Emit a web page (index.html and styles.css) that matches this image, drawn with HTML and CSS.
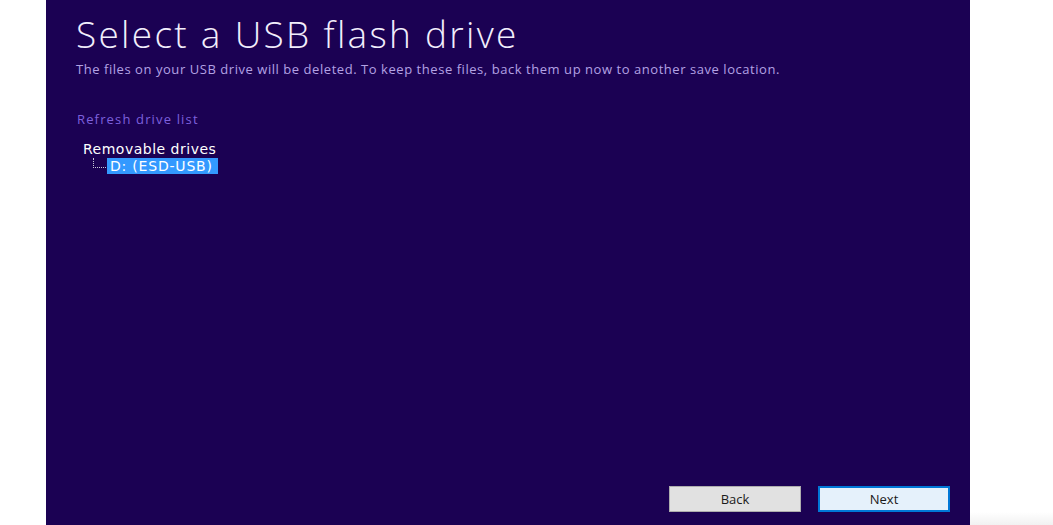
FILE: index.html
```html
<!DOCTYPE html>
<html>
<head>
<meta charset="utf-8">
<title>Select a USB flash drive</title>
<link rel="stylesheet" href="styles.css">
</head>
<body>
<div class="page">
  <main class="panel">
    <header class="head">
      <h1 class="title">Select a USB flash drive</h1>
      <p class="subtitle">The files on your USB drive will be deleted. To keep these files, back them up now to another save location.</p>
    </header>
    <a class="refresh" href="#">Refresh drive list</a>
    <div class="tree">
      <div class="tree-root">Removable drives</div>
      <div class="tree-child">
        <span class="connector"></span>
        <span class="tree-item selected">D: (ESD-USB)</span>
      </div>
    </div>
    <div class="spacer"></div>
    <footer class="actions">
      <button class="btn">Back</button>
      <button class="btn primary">Next</button>
    </footer>
  </main>
  <div class="side"></div>
</div>
</body>
</html>
```
FILE: styles.css
```css
html, body {
  margin: 0;
  padding: 0;
  background: #ffffff;
}
.page {
  display: flex;
  height: 525px;
  width: 1053px;
}
.panel {
  margin-left: 46px;
  width: 924px;
  height: 525px;
  background: #1b0153;
  display: flex;
  flex-direction: column;
  padding-left: 30px;
  box-sizing: border-box;
}
.side {
  flex: 1;
  background: linear-gradient(to bottom, #ffffff 0, #ffffff 512px, #f1f1f1 525px);
}
.head {
  padding-top: 14px;
}
.title {
  margin: 0;
  font-family: "Open Sans", sans-serif;
  font-weight: 300;
  font-size: 37px;
  line-height: 40px;
  color: #f2eefc;
  letter-spacing: 2.3px;
}
.subtitle {
  margin: 7px 0 0 0;
  font-family: "Open Sans", sans-serif;
  font-size: 13px;
  line-height: 17px;
  color: #b3a2e4;
  letter-spacing: 0.55px;
}
.refresh {
  margin-top: 32px;
  margin-left: 1px;
  font-family: "Open Sans", sans-serif;
  font-size: 13px;
  line-height: 18px;
  color: #7d60dd;
  text-decoration: none;
  align-self: flex-start;
  letter-spacing: 1.15px;
}
.tree {
  margin-top: 13px;
  margin-left: 7px;
  font-family: "DejaVu Sans", sans-serif;
  font-size: 14px;
  color: #ffffff;
}
.tree-root {
  line-height: 16px;
  letter-spacing: 0.5px;
}
.tree-child {
  display: flex;
  align-items: flex-start;
  padding-left: 10px;
  margin-top: 1px;
}
.connector {
  width: 13px;
  height: 10px;
  border-left: 1px dotted #c8c8d8;
  border-bottom: 1px dotted #c8c8d8;
  box-sizing: border-box;
}
.tree-item {
  line-height: 16px;
  padding: 0 5px 0 3px;
  margin-left: 1px;
  letter-spacing: 0.8px;
}
.selected {
  background: #3399ff;
  color: #ffffff;
}
.spacer {
  flex: 1;
}
.actions {
  display: flex;
  justify-content: flex-end;
  gap: 17px;
  padding-right: 20px;
  padding-bottom: 13px;
}
.btn {
  width: 132px;
  height: 26px;
  box-sizing: border-box;
  background: #e1e1e1;
  border: 1px solid #adadad;
  font-family: "Open Sans", sans-serif;
  font-size: 13px;
  color: #1a1a1a;
  padding: 0;
}
.btn.primary {
  border: 2px solid #0078d7;
  background: #e5f1fb;
}
```
